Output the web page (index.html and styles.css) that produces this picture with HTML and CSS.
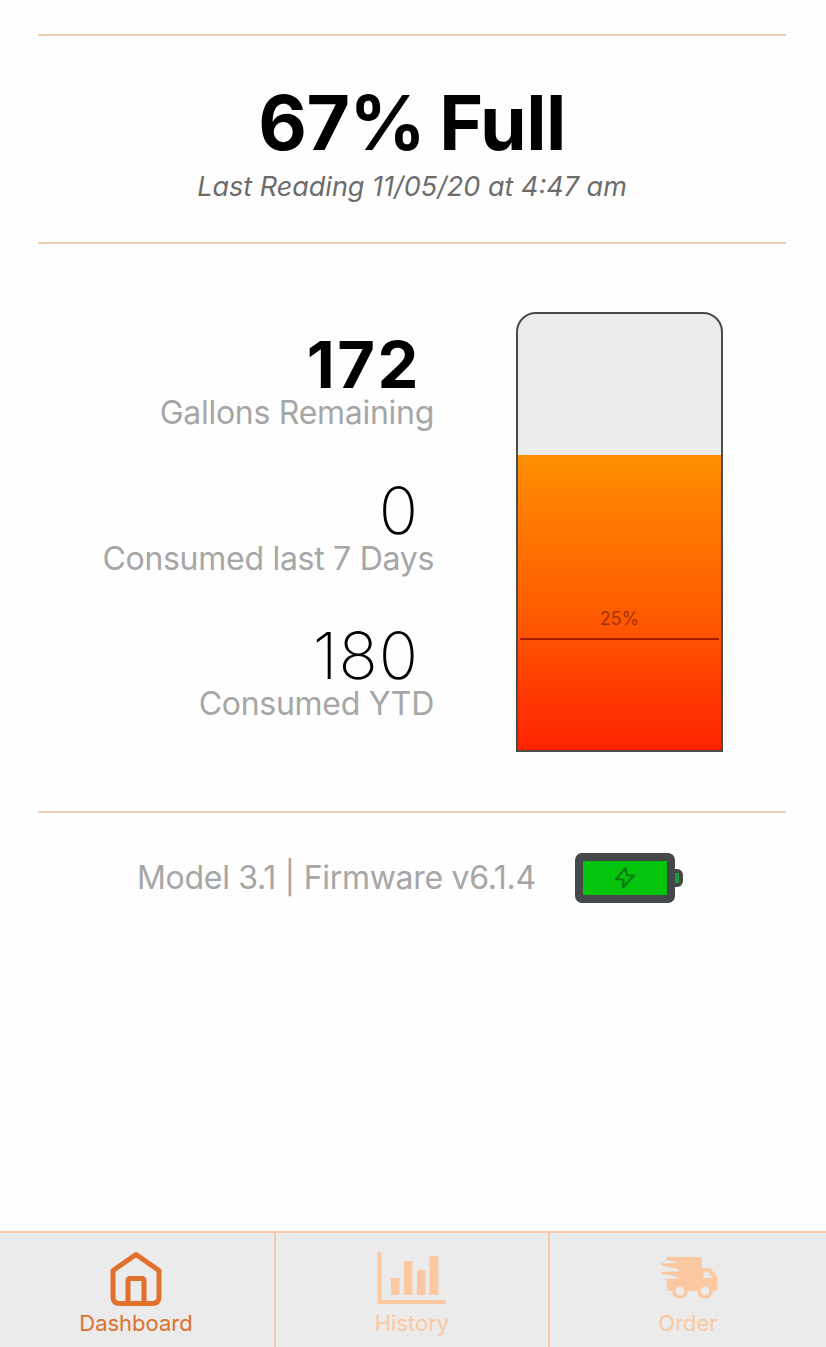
FILE: index.html
```html
<!DOCTYPE html>
<html lang="en">
<head>
    <meta charset="UTF-8">
    <meta name="viewport" content="width=device-width, initial-scale=1.0">
    <title>Tank Dashboard</title>
    <link rel="stylesheet" href="styles.css">
</head>
<body>
    <main class="content">
        <header class="reading">
            <h1>67% Full</h1>
            <p class="last-reading">Last Reading 11/05/20 at 4:47 am</p>
        </header>

        <section class="usage">
            <div class="stats">
                <div class="stat">
                    <div class="value bold">172</div>
                    <div class="label">Gallons Remaining</div>
                </div>
                <div class="stat">
                    <div class="value">0</div>
                    <div class="label">Consumed last 7 Days</div>
                </div>
                <div class="stat">
                    <div class="value">180</div>
                    <div class="label">Consumed YTD</div>
                </div>
            </div>

            <div class="tank">
                <div class="tank-fill" style="height: 67.7%"></div>
                <div class="tank-mark">25%</div>
            </div>
        </section>

        <section class="device">
            <span class="model">Model 3.1 | Firmware v6.1.4</span>
            <svg class="battery" viewBox="0 0 108 50">
                <rect x="94" y="16" width="14" height="18" rx="6" fill="#45484a"/>
                <rect x="98" y="20" width="6" height="10" fill="#1f9a35"/>
                <rect width="100" height="50" rx="7" fill="#45484a"/>
                <rect x="8" y="8" width="84" height="34" fill="#04c50b"/>
                <path d="M50.500 15L41 26.500H48.500L48 34.500L59 22.500H52Z" fill="none" stroke="#087b12" stroke-width="2.200" stroke-linejoin="round"/>
            </svg>
        </section>
    </main>

    <nav class="tabs">
        <a class="tab active">
            <svg class="home-icon" viewBox="0 0 52 56">
                <path d="M3 19.500L26 3.500L49 19.500V46Q49 52.500 42 52.500H10Q3 52.500 3 46Z" fill="none" stroke="currentColor" stroke-width="5" stroke-linejoin="round"/>
                <path d="M18 52V30Q18 27.500 20.500 27.500H31.500Q34 27.500 34 30V52" fill="none" stroke="currentColor" stroke-width="5"/>
            </svg>
            <span>Dashboard</span>
        </a>
        <a class="tab">
            <svg class="chart-icon" viewBox="0 0 70 53">
                <path d="M2.500 0V50H69" fill="none" stroke="currentColor" stroke-width="4"/>
                <path d="M14 26h8.500v17h-8.500zM27 9h8.500v34h-8.500zM40 18h8.500v25h-8.500zM52.500 4h9v39h-9z" fill="currentColor"/>
            </svg>
            <span>History</span>
        </a>
        <a class="tab">
            <svg class="truck-icon" viewBox="0 0 58 42">
                <path d="M9 0H39Q42 0 42 3V11H48Q50 11 51.500 12.500L56 18Q57.500 20 57.500 23V30Q57.500 34 53 34H10Q7 34 7 31V24.500L4 22L17 21.500V19.500L1.500 17V15L19 14.500V12.500L2 8.500L0 6.500L16 6V5L6 3L7 0Z" fill="currentColor"/>
                <path d="M43.500 14.500H47.500L53 21H43.500Z" fill="#ebebeb"/>
                <circle cx="20" cy="34" r="6" fill="#ebebeb" stroke="currentColor" stroke-width="3.500"/>
                <circle cx="45" cy="34" r="6" fill="#ebebeb" stroke="currentColor" stroke-width="3.500"/>
            </svg>
            <span>Order</span>
        </a>
    </nav>
</body>
</html>
```
FILE: styles.css
```css
* {
    box-sizing: border-box;
}
body {
    font-family: Inter, "Liberation Sans", sans-serif;
    margin: 0;
    height: 1347px;
    display: flex;
    flex-direction: column;
    background-color: #fefefe;
    color: #000;
}
.content {
    flex: 1;
    padding: 34px 40px 0 38px;
}
.reading {
    border-top: 2px solid #f0cfb0;
    border-bottom: 2px solid #f0cfb0;
    padding: 45px 0 33px;
    text-align: center;
}
h1 {
    margin: 0;
    font-size: 75px;
    line-height: 84px;
    font-weight: 700;
    letter-spacing: -0.6px;
    word-spacing: -3px;
}
.last-reading {
    margin: 0;
    font-size: 27px;
    line-height: 44px;
    font-style: italic;
    color: #6c6c6c;
}
.usage {
    display: flex;
    padding: 68px 63px 59px 0;
    border-bottom: 2px solid #f0cfb0;
}
.stats {
    width: 396px;
    padding-top: 28px;
    margin-right: 82px;
    display: flex;
    flex-direction: column;
    gap: 49.5px;
    text-align: right;
}
.value {
    font-size: 65px;
    line-height: 50px;
    font-weight: 200;
    letter-spacing: 1px;
    padding-right: 15px;
}
.value.bold {
    font-weight: 700;
    letter-spacing: 2.5px;
    padding-right: 13px;
}
.label {
    font-size: 32px;
    line-height: 46px;
    letter-spacing: -0.28px;
    color: #a6a6a6;
}
.tank {
    position: relative;
    width: 207px;
    height: 440px;
    display: flex;
    flex-direction: column;
    justify-content: flex-end;
    border: 2px solid #4b4b4b;
    border-radius: 20px 20px 0 0;
    background-color: #ececec;
}
.tank-fill {
    background: linear-gradient(#ff8f00, #ff5a00 55%, #ff2200);
}
/* low level marker, sits over the fill */
.tank-mark {
    position: absolute;
    left: 2px;
    right: 2px;
    bottom: 110px;
    border-bottom: 2px solid #a61a00;
    padding-bottom: 6px;
    font-size: 18px;
    line-height: 26px;
    text-align: center;
    color: #a83208;
}
.device {
    display: flex;
    align-items: center;
    padding: 40px 0 0 99px;
}
.model {
    width: 398px;
    margin-right: 40px;
    font-size: 32px;
    line-height: 50px;
    letter-spacing: -0.3px;
    white-space: nowrap;
    color: #a6a6a6;
}
.battery {
    width: 108px;
    height: 50px;
}
.tabs {
    display: grid;
    grid-template-columns: 276px 274px 276px;
    height: 116px;
    border-top: 2px solid #f5c9a8;
    background-color: #ebebeb;
}
.tab {
    display: flex;
    flex-direction: column;
    align-items: center;
    justify-content: flex-end;
    padding-bottom: 9px;
    font-size: 22px;
    line-height: 30px;
    color: #fbc8a2;
}
.tab:not(:last-child) {
    border-right: 2px solid #f5c9a8;
}
.tab.active {
    color: #e0702c;
    padding-right: 2px;
}
.home-icon {
    width: 52px;
    height: 56px;
    margin-bottom: 1px;
}
.chart-icon {
    width: 70px;
    height: 53px;
    margin-bottom: 3px;
}
.truck-icon {
    width: 58px;
    height: 42px;
    margin-bottom: 9px;
    margin-left: 2px;
}
```
